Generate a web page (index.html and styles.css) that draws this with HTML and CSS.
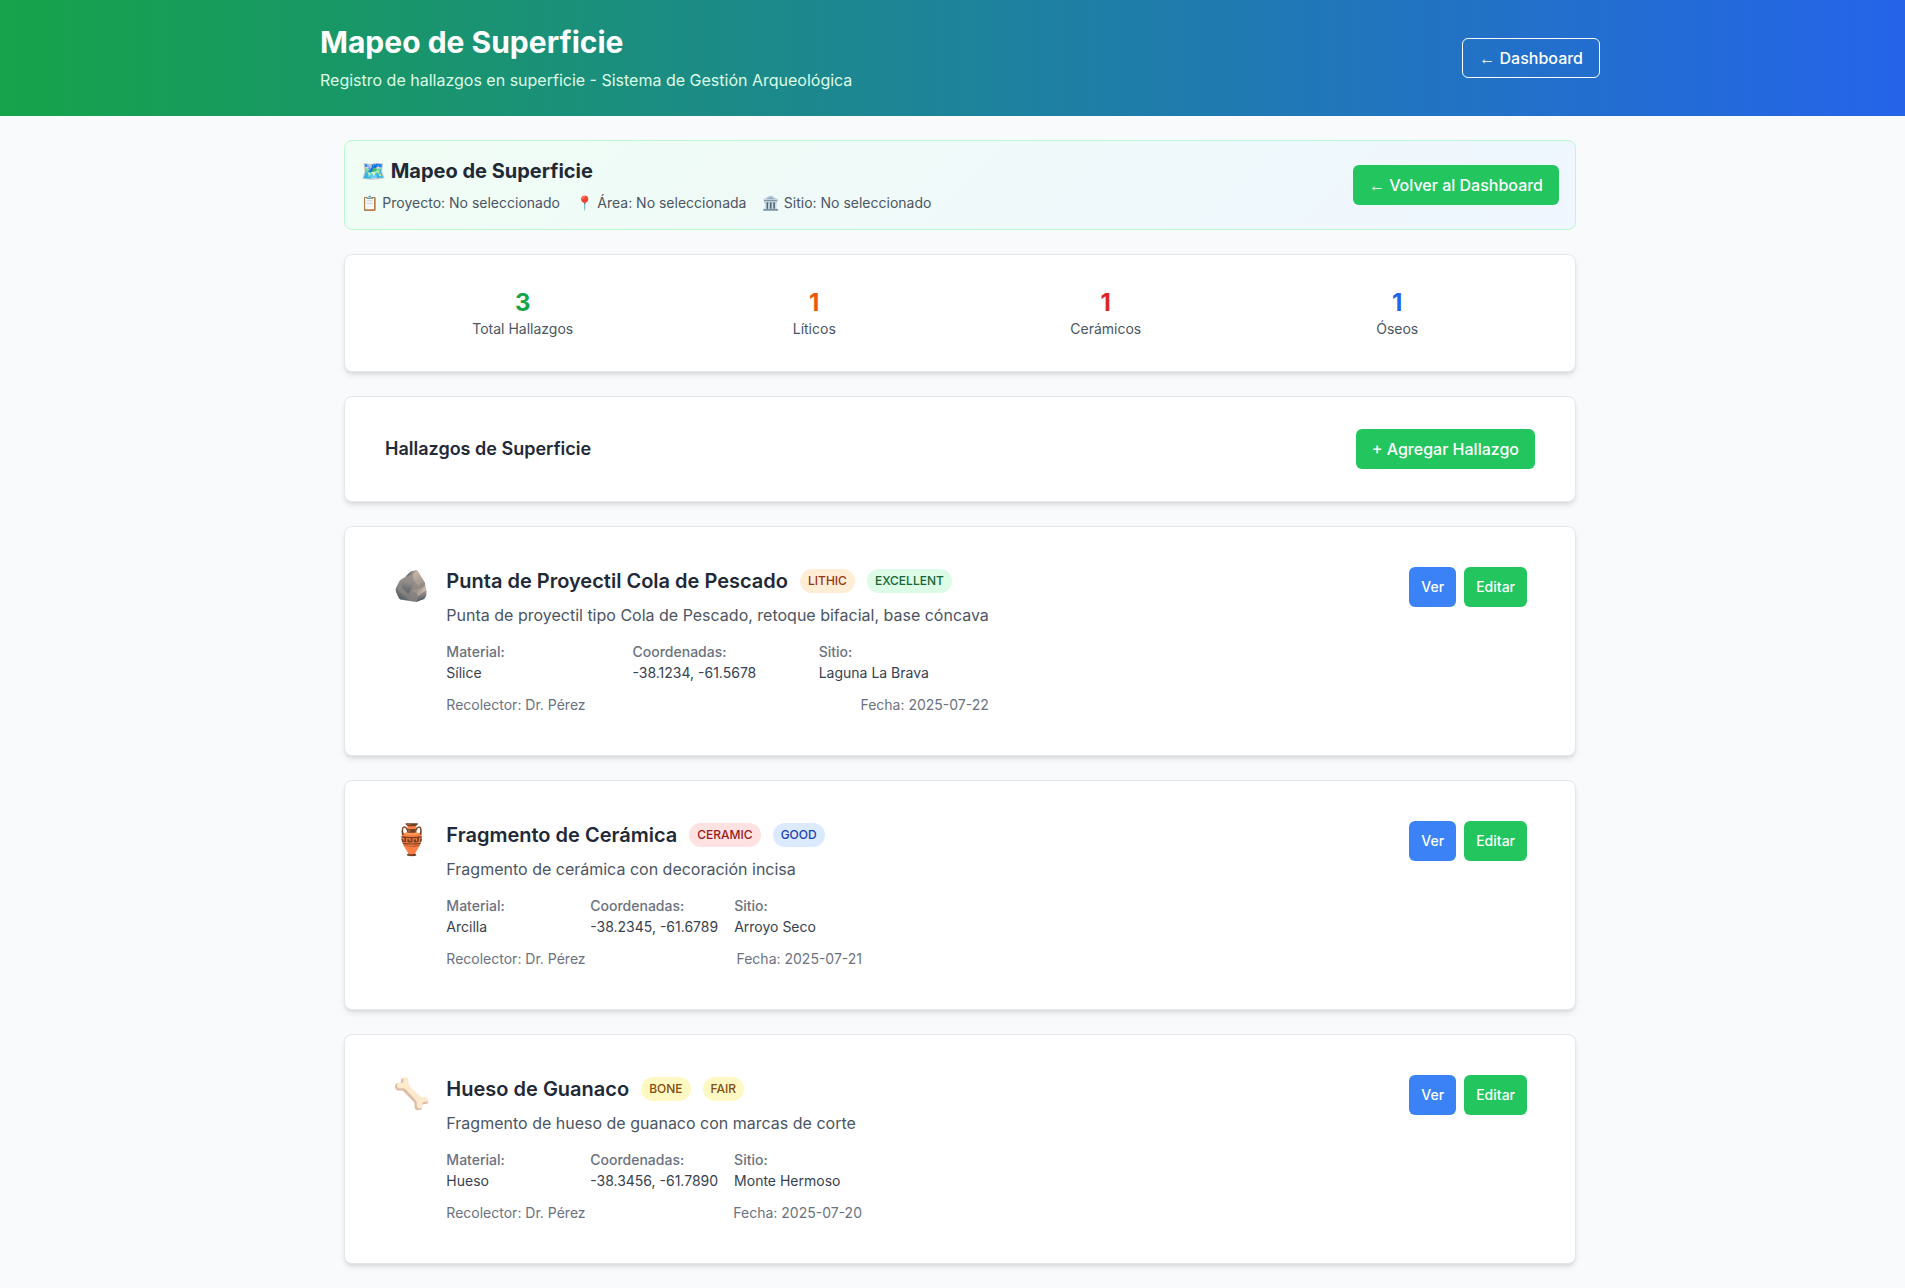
FILE: index.html
```html
<!DOCTYPE html>
<html lang="es">
<head>
<meta charset="utf-8">
<title>Mapeo de Superficie</title>
<link rel="stylesheet" href="styles.css">
</head>
<body>
<div class="page">
  <header class="site-header">
    <div class="site-header-inner">
      <div>
        <h1 class="site-title">Mapeo de Superficie</h1>
        <p class="site-subtitle">Registro de hallazgos en superficie - Sistema de Gestión Arqueológica</p>
      </div>
      <a class="btn btn-outline" href="#"><span class="arrow">←</span> Dashboard</a>
    </div>
  </header>

  <main class="container">
    <section class="banner">
      <div>
        <h2 class="banner-title">🗺️ Mapeo de Superficie</h2>
        <div class="banner-meta">
          <span>📋 Proyecto: No seleccionado</span>
          <span>📍 Área: No seleccionada</span>
          <span>🏛️ Sitio: No seleccionado</span>
        </div>
      </div>
      <a class="btn btn-green" href="#"><span class="arrow">←</span> Volver al Dashboard</a>
    </section>

    <section class="card stats">
      <div class="stat"><div class="stat-value text-green">3</div><div class="stat-label">Total Hallazgos</div></div>
      <div class="stat"><div class="stat-value text-orange">1</div><div class="stat-label">Líticos</div></div>
      <div class="stat"><div class="stat-value text-red">1</div><div class="stat-label">Cerámicos</div></div>
      <div class="stat"><div class="stat-value text-blue">1</div><div class="stat-label">Óseos</div></div>
    </section>

    <section class="card section-head">
      <h3 class="section-title">Hallazgos de Superficie</h3>
      <a class="btn btn-green" href="#">+ Agregar Hallazgo</a>
    </section>

    <article class="card finding">
      <div class="finding-main">
        <div class="finding-icon">🪨</div>
        <div class="finding-body">
          <div class="finding-head">
            <h4 class="finding-title">Punta de Proyectil Cola de Pescado</h4>
            <span class="badge badge-orange">LITHIC</span>
            <span class="badge badge-green">EXCELLENT</span>
          </div>
          <p class="finding-desc">Punta de proyectil tipo Cola de Pescado, retoque bifacial, base cóncava</p>
          <div class="details">
            <div><div class="detail-label">Material:</div><div class="detail-value">Sílice</div></div>
            <div><div class="detail-label">Coordenadas:</div><div class="detail-value">-38.1234, -61.5678</div></div>
            <div><div class="detail-label">Sitio:</div><div class="detail-value">Laguna La Brava</div></div>
          </div>
          <div class="finding-foot"><span>Recolector: Dr. Pérez</span><span>Fecha: 2025-07-22</span></div>
        </div>
      </div>
      <div class="actions"><a class="btn btn-small btn-blue" href="#">Ver</a><a class="btn btn-small btn-green" href="#">Editar</a></div>
    </article>

    <article class="card finding">
      <div class="finding-main">
        <div class="finding-icon">🏺</div>
        <div class="finding-body">
          <div class="finding-head">
            <h4 class="finding-title">Fragmento de Cerámica</h4>
            <span class="badge badge-red">CERAMIC</span>
            <span class="badge badge-blue">GOOD</span>
          </div>
          <p class="finding-desc">Fragmento de cerámica con decoración incisa</p>
          <div class="details">
            <div><div class="detail-label">Material:</div><div class="detail-value">Arcilla</div></div>
            <div><div class="detail-label">Coordenadas:</div><div class="detail-value">-38.2345, -61.6789</div></div>
            <div><div class="detail-label">Sitio:</div><div class="detail-value">Arroyo Seco</div></div>
          </div>
          <div class="finding-foot"><span>Recolector: Dr. Pérez</span><span>Fecha: 2025-07-21</span></div>
        </div>
      </div>
      <div class="actions"><a class="btn btn-small btn-blue" href="#">Ver</a><a class="btn btn-small btn-green" href="#">Editar</a></div>
    </article>

    <article class="card finding">
      <div class="finding-main">
        <div class="finding-icon">🦴</div>
        <div class="finding-body">
          <div class="finding-head">
            <h4 class="finding-title">Hueso de Guanaco</h4>
            <span class="badge badge-yellow">BONE</span>
            <span class="badge badge-yellow">FAIR</span>
          </div>
          <p class="finding-desc">Fragmento de hueso de guanaco con marcas de corte</p>
          <div class="details">
            <div><div class="detail-label">Material:</div><div class="detail-value">Hueso</div></div>
            <div><div class="detail-label">Coordenadas:</div><div class="detail-value">-38.3456, -61.7890</div></div>
            <div><div class="detail-label">Sitio:</div><div class="detail-value">Monte Hermoso</div></div>
          </div>
          <div class="finding-foot"><span>Recolector: Dr. Pérez</span><span>Fecha: 2025-07-20</span></div>
        </div>
      </div>
      <div class="actions"><a class="btn btn-small btn-blue" href="#">Ver</a><a class="btn btn-small btn-green" href="#">Editar</a></div>
    </article>
  </main>
</div>
</body>
</html>
```

FILE: styles.css
```css
* { box-sizing: border-box; }
html, body { margin: 0; padding: 0; overflow-x: hidden; }
body {
  background: #f9fafb;
  color: #1f2937;
  font-family: "Inter", "Noto Color Emoji", sans-serif;
  font-size: 16px;
  line-height: 24px;
}
h1, h2, h3, h4, p { margin: 0; }
a { text-decoration: none; }

.page { width: 1920px; }

.site-header {
  background: linear-gradient(90deg, #16a34a, #2563eb);
  padding: 24px 0;
}
.site-header-inner {
  width: 1280px;
  margin: 0 auto;
  display: flex;
  align-items: center;
  justify-content: space-between;
}
.site-title { color: #fff; font-size: 30px; line-height: 36px; font-weight: 700; }
.site-subtitle { color: #dcfce7; margin-top: 8px; }

.btn {
  display: inline-flex;
  align-items: center;
  justify-content: center;
  height: 40px;
  padding: 0 16px;
  border-radius: 6px;
  font-weight: 500;
  color: #fff;
  white-space: pre;
}
.btn-outline { border: 1px solid #fff; }
.btn-green { background: #22c55e; }
.btn-blue { background: #3b82f6; }
.btn-small { padding: 0 12px; font-size: 14px; line-height: 20px; }
.arrow { font-family: "Noto Sans", sans-serif; font-size: 16px; }

.container {
  width: 1232px;
  margin: 0 auto;
  padding: 24px 0;
  display: flex;
  flex-direction: column;
  gap: 24px;
}

.banner {
  display: flex;
  align-items: center;
  justify-content: space-between;
  padding: 16px;
  border: 1px solid #bbf7d0;
  border-radius: 8px;
  background: linear-gradient(135deg, #f0fdf4, #eff6ff);
}
.banner-title { font-size: 20px; line-height: 28px; font-weight: 700; }
.banner-meta {
  display: flex;
  gap: 16px;
  margin-top: 8px;
  font-size: 14px;
  line-height: 20px;
  color: #4b5563;
}

.card {
  background: #fff;
  border: 1px solid #e5e7eb;
  border-radius: 8px;
  box-shadow: 0 4px 6px -1px rgba(0, 0, 0, 0.1), 0 2px 4px -2px rgba(0, 0, 0, 0.1);
}

.stats {
  display: grid;
  grid-template-columns: repeat(4, 1fr);
  padding: 32px;
  text-align: center;
}
.stat-value { font-size: 24px; line-height: 32px; font-weight: 700; }
.stat-label { font-size: 14px; line-height: 20px; color: #4b5563; }
.text-green { color: #16a34a; }
.text-orange { color: #ea580c; }
.text-red { color: #dc2626; }
.text-blue { color: #2563eb; }

.section-head {
  display: flex;
  align-items: center;
  justify-content: space-between;
  padding: 32px 40px;
}
.section-title { font-size: 18px; line-height: 28px; font-weight: 600; }

.finding {
  display: flex;
  align-items: flex-start;
  justify-content: space-between;
  padding: 40px 48px;
}
.finding-main { display: flex; align-items: flex-start; gap: 16px; }
.finding-icon { font-size: 30px; line-height: 36px; }
.finding-head { display: flex; align-items: center; gap: 12px; }
.finding-title { font-size: 20px; line-height: 28px; font-weight: 600; }
.badge {
  padding: 4px 8px;
  border-radius: 9999px;
  font-size: 12px;
  line-height: 16px;
  font-weight: 500;
}
.badge-orange { background: #ffedd5; color: #9a3412; }
.badge-green { background: #dcfce7; color: #166534; }
.badge-red { background: #fee2e2; color: #991b1b; }
.badge-blue { background: #dbeafe; color: #1e40af; }
.badge-yellow { background: #fef9c3; color: #854d0e; }

.finding-desc { margin-top: 8px; color: #4b5563; }
.details {
  display: grid;
  grid-template-columns: repeat(3, 1fr);
  gap: 16px;
  margin-top: 15px;
  font-size: 14px;
  line-height: 20px;
}
.detail-label { color: #6b7280; font-weight: 500; }
.detail-value { color: #374151; margin-top: 1px; }
.finding-foot {
  display: flex;
  justify-content: space-between;
  margin-top: 12px;
  font-size: 14px;
  line-height: 20px;
  color: #6b7280;
}
.actions { display: flex; gap: 8px; }
```
